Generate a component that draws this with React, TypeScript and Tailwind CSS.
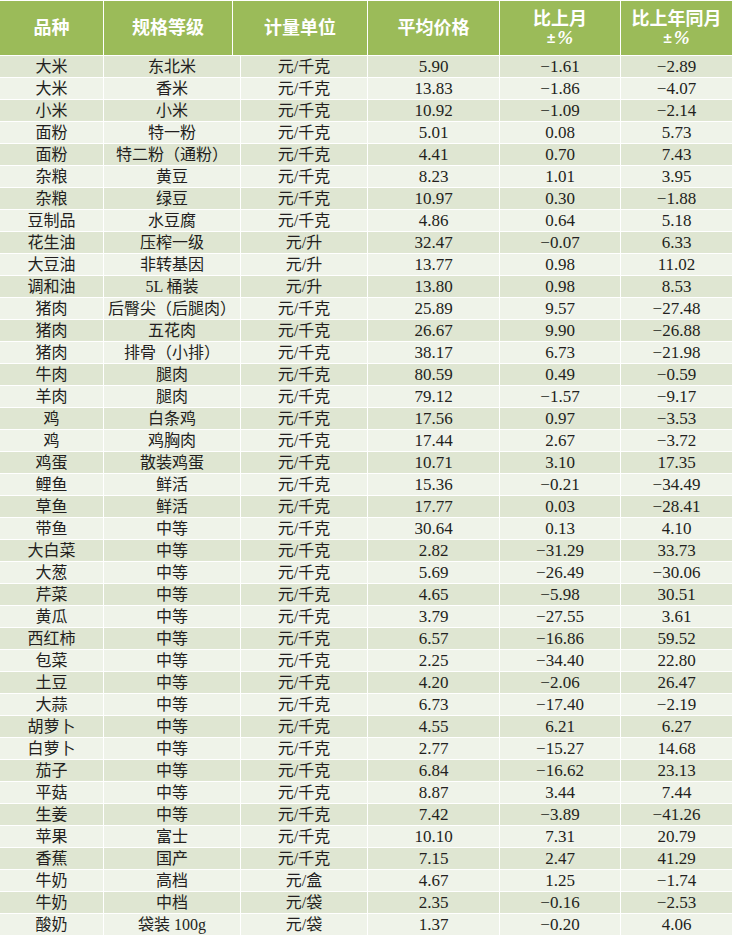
const rows: [string, string, string, string, string, string][] = [
  ["大米", "东北米", "元/千克", "5.90", "−1.61", "−2.89"],
  ["大米", "香米", "元/千克", "13.83", "−1.86", "−4.07"],
  ["小米", "小米", "元/千克", "10.92", "−1.09", "−2.14"],
  ["面粉", "特一粉", "元/千克", "5.01", "0.08", "5.73"],
  ["面粉", "特二粉（通粉）", "元/千克", "4.41", "0.70", "7.43"],
  ["杂粮", "黄豆", "元/千克", "8.23", "1.01", "3.95"],
  ["杂粮", "绿豆", "元/千克", "10.97", "0.30", "−1.88"],
  ["豆制品", "水豆腐", "元/千克", "4.86", "0.64", "5.18"],
  ["花生油", "压榨一级", "元/升", "32.47", "−0.07", "6.33"],
  ["大豆油", "非转基因", "元/升", "13.77", "0.98", "11.02"],
  ["调和油", "5L 桶装", "元/升", "13.80", "0.98", "8.53"],
  ["猪肉", "后臀尖（后腿肉）", "元/千克", "25.89", "9.57", "−27.48"],
  ["猪肉", "五花肉", "元/千克", "26.67", "9.90", "−26.88"],
  ["猪肉", "排骨（小排）", "元/千克", "38.17", "6.73", "−21.98"],
  ["牛肉", "腿肉", "元/千克", "80.59", "0.49", "−0.59"],
  ["羊肉", "腿肉", "元/千克", "79.12", "−1.57", "−9.17"],
  ["鸡", "白条鸡", "元/千克", "17.56", "0.97", "−3.53"],
  ["鸡", "鸡胸肉", "元/千克", "17.44", "2.67", "−3.72"],
  ["鸡蛋", "散装鸡蛋", "元/千克", "10.71", "3.10", "17.35"],
  ["鲤鱼", "鲜活", "元/千克", "15.36", "−0.21", "−34.49"],
  ["草鱼", "鲜活", "元/千克", "17.77", "0.03", "−28.41"],
  ["带鱼", "中等", "元/千克", "30.64", "0.13", "4.10"],
  ["大白菜", "中等", "元/千克", "2.82", "−31.29", "33.73"],
  ["大葱", "中等", "元/千克", "5.69", "−26.49", "−30.06"],
  ["芹菜", "中等", "元/千克", "4.65", "−5.98", "30.51"],
  ["黄瓜", "中等", "元/千克", "3.79", "−27.55", "3.61"],
  ["西红柿", "中等", "元/千克", "6.57", "−16.86", "59.52"],
  ["包菜", "中等", "元/千克", "2.25", "−34.40", "22.80"],
  ["土豆", "中等", "元/千克", "4.20", "−2.06", "26.47"],
  ["大蒜", "中等", "元/千克", "6.73", "−17.40", "−2.19"],
  ["胡萝卜", "中等", "元/千克", "4.55", "6.21", "6.27"],
  ["白萝卜", "中等", "元/千克", "2.77", "−15.27", "14.68"],
  ["茄子", "中等", "元/千克", "6.84", "−16.62", "23.13"],
  ["平菇", "中等", "元/千克", "8.87", "3.44", "7.44"],
  ["生姜", "中等", "元/千克", "7.42", "−3.89", "−41.26"],
  ["苹果", "富士", "元/千克", "10.10", "7.31", "20.79"],
  ["香蕉", "国产", "元/千克", "7.15", "2.47", "41.29"],
  ["牛奶", "高档", "元/盒", "4.67", "1.25", "−1.74"],
  ["牛奶", "中档", "元/袋", "2.35", "−0.16", "−2.53"],
  ["酸奶", "袋装 100g", "元/袋", "1.37", "−0.20", "4.06"],
];

const font = { fontFamily: '"Liberation Serif", "Noto Sans CJK SC", serif' };

// second header line: "±%" with a small bold ± and a large italic %
function PctLine() {
  return (
    <div className="flex items-center h-[18px]">
      <span className="text-[15px] leading-[15px]" style={{ fontFamily: '"Liberation Sans", sans-serif' }}>±</span>
      <span className="text-[19px] leading-[17px] italic ml-[2px]">%</span>
    </div>
  );
}

export default function App() {
  return (
    <div className="w-[732px] h-[935px] overflow-hidden bg-white flex flex-col gap-px pt-px text-[#231f20]" style={font}>
      <div className="grid grid-cols-[103px_128px_134px_131px_120px_111px] gap-px h-[54px] shrink-0 text-white font-bold text-[18px]">
        <div className="bg-[#9bbb59] flex items-center justify-center">品种</div>
        <div className="bg-[#9bbb59] flex items-center justify-center">规格等级</div>
        <div className="bg-[#9bbb59] flex items-center justify-center">计量单位</div>
        <div className="bg-[#9bbb59] flex items-center justify-center">平均价格</div>
        <div className="bg-[#9bbb59] flex flex-col items-center justify-center">
          <div className="leading-[19px]">比上月</div>
          <PctLine />
        </div>
        <div className="bg-[#9bbb59] flex flex-col items-center justify-center">
          <div className="leading-[19px]">比上年同月</div>
          <PctLine />
        </div>
      </div>
      {rows.map((r, i) => (
        <div
          key={i}
          className={`grid grid-cols-[103px_136px_126px_131px_120px_111px] gap-px h-[21px] shrink-0 text-[16px] leading-none ${
            i % 2 === 0 ? "*:bg-[#dfe6d2]" : "*:bg-[#eff3e9]"
          }`}
        >
          <div className="flex items-center justify-center">{r[0]}</div>
          <div className="flex items-center justify-center">{r[1]}</div>
          <div className="flex items-center justify-center">{r[2]}</div>
          <div className="flex items-center justify-center text-[17px]">{r[3]}</div>
          <div className="flex items-center justify-center text-[17px]">{r[4]}</div>
          <div className="flex items-center justify-center text-[17px]">{r[5]}</div>
        </div>
      ))}
    </div>
  );
}
